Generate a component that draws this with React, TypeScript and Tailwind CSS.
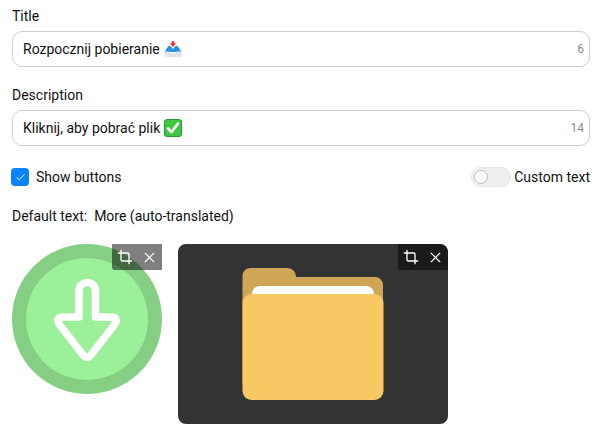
import { Crop, X, Check } from "lucide-react";

function Controls({ dark }: { dark?: boolean }) {
  return (
    <div className={`absolute top-0 right-0 flex h-[26px] w-[50px] items-center justify-between pl-[5px] pr-[4px] rounded-bl-[3px] ${dark ? "bg-[#1a1a1a] rounded-tr-[8px]" : "bg-black/50"}`}>
      <Crop size={16} strokeWidth={2} color="#fff" />
      <X size={17} strokeWidth={1.6} color="#fff" />
    </div>
  );
}

function InboxEmoji() {
  return (
    <svg width="18" height="18" viewBox="0 0 18 18" className="ml-1 shrink-0">
      <path d="M7.600 1.200h2.800v2.300h1.800L9 7 5.800 3.500h1.800z" fill="#e8323c" />
      <path d="M4 6.500C5 5.500 6 5.500 6.500 6L9 9l2.500-3c.5-.5 1.500-.5 2.500.5l3.500 5.500H.5z" fill="#2b8fe6" />
      <path d="M.5 11.500h5l1.200 1.800h4.600l1.200-1.800h5V16.500a.8.8 0 0 1-.8.8H1.300a.8.8 0 0 1-.8-.8z" fill="#dfe5ea" />
    </svg>
  );
}

function CheckEmoji() {
  return (
    <svg width="18" height="18" viewBox="0 0 18 18" className="ml-1 shrink-0">
      <rect x="0" y="0" width="18" height="18" rx="3.500" fill="#1f9e3a" />
      <rect x="1" y="1" width="16" height="16" rx="2.500" fill="#3cc83f" />
      <path d="M4 9.500l3.500 3.500L14 4.500" fill="none" stroke="#fff" strokeWidth="2.800" strokeLinecap="round" strokeLinejoin="round" />
    </svg>
  );
}

function Field({ label, value, count, emoji }: { label: string; value: string; count: number; emoji: React.ReactNode }) {
  return (
    <div className="flex flex-col">
      <div className="h-[31px] pt-[7px] text-[14px] leading-[18px]">{label}</div>
      <div className="flex h-[36px] items-center rounded-[10px] border border-[#cfcfcf] pl-[10px] pr-[5px]">
        <span className="text-[14px] leading-[18px] whitespace-pre">{value}</span>
        {emoji}
        <span className="ml-auto text-[12px] leading-[16px] text-[#8a8a8a]">{count}</span>
      </div>
    </div>
  );
}

export default function App() {
  return (
    <div className="h-[446px] w-[610px] overflow-hidden bg-white pl-3 pr-5 text-[#111] font-['Roboto',sans-serif]">
      <div className="flex flex-col gap-[12px]">
        <Field label="Title" value="Rozpocznij pobieranie" count={6} emoji={<InboxEmoji />} />
        <Field label="Description" value="Kliknij, aby pobrać plik" count={14} emoji={<CheckEmoji />} />
      </div>

      <div className="mt-[21px] flex h-[20px] items-center justify-between">
        <div className="flex items-center">
          <span className="-ml-px flex h-[18px] w-[18px] items-center justify-center rounded-[4px] bg-[#0a84ff]">
            <Check size={11} strokeWidth={2} color="#fff" />
          </span>
          <span className="ml-[7px] text-[14px] leading-[18px]">Show buttons</span>
        </div>
        <div className="flex items-center">
          <span className="flex h-[20px] w-[40px] items-center rounded-full border border-[#e4e4e4] bg-[#efefef] pl-[2px]">
            <span className="h-[14px] w-[14px] rounded-full border border-[#bdbdbd] bg-white" />
          </span>
          <span className="ml-[3px] text-[14px] leading-[18px]">Custom text</span>
        </div>
      </div>

      <div className="mt-[20px] text-[14px] leading-[18px] whitespace-pre">Default text:  More (auto-translated)</div>

      <div className="mt-[19px] flex gap-4">
        <div className="relative h-[150px] w-[150px] shrink-0">
          <svg width="150" height="150" viewBox="0 0 150 150">
            <circle cx="75" cy="75" r="75" fill="#84cf83" />
            <circle cx="75" cy="75" r="61" fill="#9df09a" />
            <path
              d="M67 73V46.750A8.250 8.250 0 0 1 83.500 46.750V73H98Q107 73 103 80L79 111Q75 115.500 71 111L47 80Q43 73 52 73Z"
              fill="none"
              stroke="#fff"
              strokeWidth="7.500"
              strokeLinejoin="round"
            />
          </svg>
          <Controls />
        </div>
        <div className="relative h-[180px] w-[270px] shrink-0 overflow-hidden rounded-[8px] bg-[#333]">
          <svg width="270" height="180" viewBox="0 0 270 180">
            <path d="M64.500 140V32a8 8 0 0 1 8-8h37a8.500 8.500 0 0 1 8.500 9h79a8 8 0 0 1 8 8v99z" fill="#cfa655" />
            <path d="M74 50a8 8 0 0 1 8-8h106a8 8 0 0 1 8 8v4H74z" fill="#fff" />
            <rect x="64.500" y="50" width="141" height="106" rx="9" fill="#f8c962" />
          </svg>
          <Controls dark />
        </div>
      </div>
    </div>
  );
}
